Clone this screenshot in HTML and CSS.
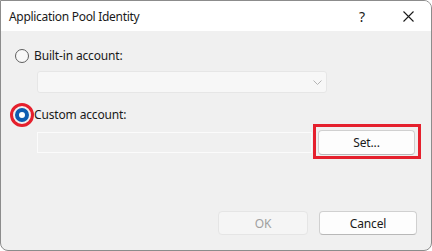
FILE: index.html
```html
<!DOCTYPE html>
<html lang="en">
<head>
  <meta charset="UTF-8" />
  <title>Application Pool Identity</title>
  <link rel="stylesheet" href="styles.css">
</head>
<body>
  <div class="dialog">
    <div class="titlebar">
      <div class="title">Application Pool Identity</div>
      <div class="caption-buttons">
        <span class="cap-btn">?</span>
        <span class="cap-btn">
          <svg width="11" height="11" viewBox="0 0 11 11"><path d="M0.5 0.5 L10.5 10.5 M10.5 0.5 L0.5 10.5" stroke="#1a1a1a" stroke-width="1.1" fill="none"/></svg>
        </span>
      </div>
    </div>

    <div class="content">
      <label class="radio-row first">
        <span class="radio"></span>
        <span>Built-in account:</span>
      </label>
      <div class="combo">
        <svg width="9" height="5" viewBox="0 0 9 5"><path d="M0.5 0.5 L4.5 4.5 L8.5 0.5" stroke="#b4b4b4" stroke-width="1" fill="none"/></svg>
      </div>

      <label class="radio-row second">
        <span class="radio checked"><span class="ring"></span></span>
        <span>Custom account:</span>
      </label>
      <div class="account-row">
        <div class="field"></div>
        <div class="set-wrap">
          <button class="btn">Set...</button>
          <span class="highlight"></span>
        </div>
      </div>

      <div class="footer">
        <button class="btn ok" disabled>OK</button>
        <button class="btn cancel">Cancel</button>
      </div>
    </div>
  </div>
</body>
</html>
```

FILE: styles.css
```css
html, body {
  margin: 0;
  height: 100%;
  background: #ffffff;
}

body {
  font-family: 'Noto Sans', 'Open Sans', sans-serif;
  font-size: 12px;
  letter-spacing: -0.15px;
  color: #1a1a1a;
}

.dialog {
  box-sizing: border-box;
  width: 432px;
  height: 251px;
  border: 1px solid #8c8c8c;
  border-radius: 0 8px 8px 8px;
  background: #f0f0f0;
  display: flex;
  flex-direction: column;
  overflow: hidden;
}

.titlebar {
  height: 30px;
  background: #ffffff;
  display: flex;
  align-items: center;
  justify-content: space-between;
  padding-left: 8px;
}

.title {
  letter-spacing: -0.3px;
}

.caption-buttons {
  display: flex;
  height: 100%;
}

.cap-btn {
  width: 46px;
  height: 100%;
  display: flex;
  align-items: center;
  justify-content: center;
  font-size: 14px;
}

.content {
  flex: 1;
  display: flex;
  flex-direction: column;
  padding: 0 14px 15px 14px;
}

.radio-row {
  display: flex;
  align-items: center;
  gap: 5px;
  height: 14px;
  line-height: 14px;
}

.radio-row.first {
  margin-top: 18px;
}

.radio-row.second {
  margin-top: 15px;
}

.radio {
  position: relative;
  box-sizing: border-box;
  width: 14px;
  height: 14px;
  border-radius: 50%;
  border: 1px solid #5f5f5f;
  background: #f8f8f8;
}

.radio.checked {
  border: 4px solid #0e5cb0;
  background: #ffffff;
}

.radio .ring {
  position: absolute;
  top: -9px;
  left: -9px;
  width: 18px;
  height: 18px;
  border: 3px solid #e5202d;
  border-radius: 50%;
}

.combo {
  box-sizing: border-box;
  margin: 8px 0 0 22px;
  width: 290px;
  height: 22px;
  background: #f7f7f7;
  border: 1px solid #e6e6e6;
  border-radius: 3px;
  display: flex;
  align-items: center;
  justify-content: flex-end;
  padding-right: 4px;
}

.account-row {
  display: flex;
  align-items: center;
  margin: 8px 0 0 22px;
}

.field {
  box-sizing: border-box;
  width: 275px;
  height: 21px;
  border: 1px solid #fbfbfb;
  background: #f0f0f0;
}

.set-wrap {
  position: relative;
  margin-left: 6px;
}

.highlight {
  position: absolute;
  top: -6px;
  left: -5px;
  right: -6px;
  bottom: -4px;
  border: 3px solid #e5202d;
}

.btn {
  box-sizing: border-box;
  display: block;
  width: 97px;
  height: 25px;
  padding: 0;
  font-family: inherit;
  font-size: 12px;
  letter-spacing: inherit;
  color: #1a1a1a;
  background: #fdfdfd;
  border: 1px solid #d0d0d0;
  border-bottom-color: #b8b8b8;
  border-radius: 4px;
}

.footer {
  margin-top: auto;
  display: flex;
  justify-content: flex-end;
  gap: 11px;
}

.footer .btn {
  height: 24px;
}

.btn.ok {
  width: 90px;
  background: #f5f5f5;
  border-color: #e5e5e5;
  color: #a0a0a0;
}

.btn.cancel {
  width: 98px;
}
```
